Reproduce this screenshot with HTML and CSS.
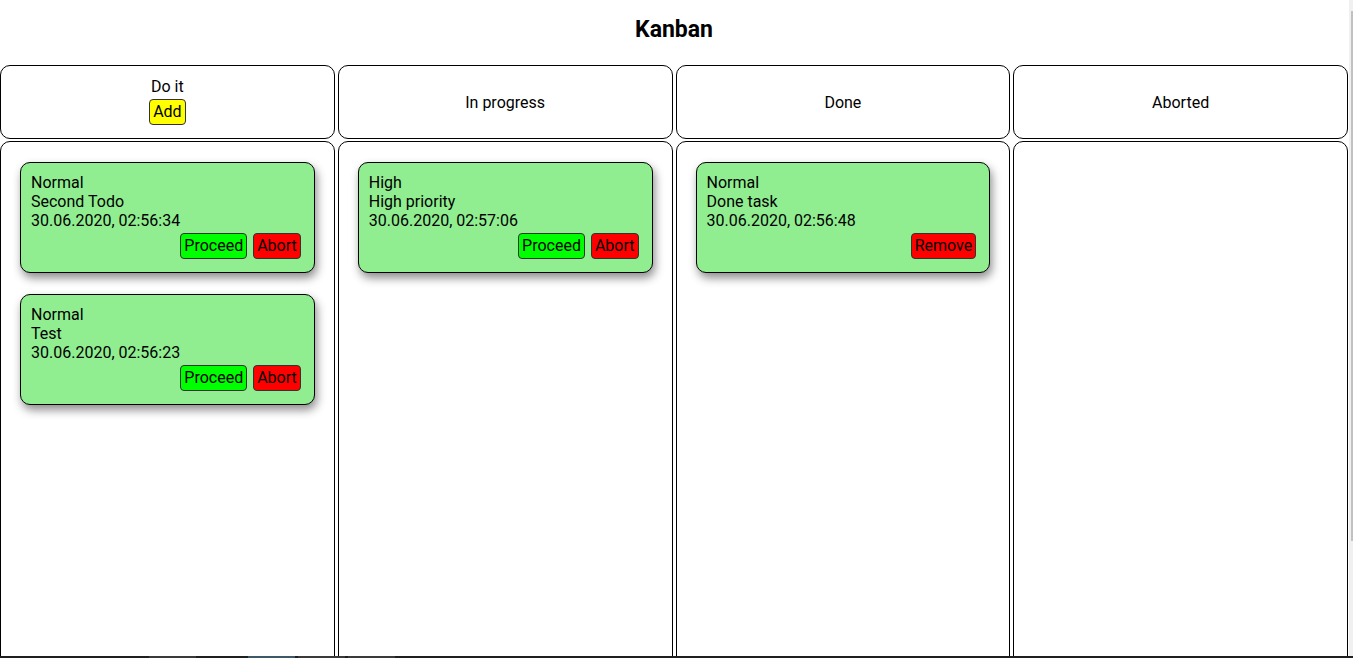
FILE: index.html
```html
<!DOCTYPE html>
<html lang="en">
<head>
<meta charset="utf-8">
<title>Kanban</title>
<link rel="stylesheet" href="styles.css">
</head>
<body>
<h1 class="title">Kanban</h1>
<main class="board">
  <section class="column">
    <header class="col-head">
      <div>Do it</div>
      <button class="btn btn-add">Add</button>
    </header>
    <div class="col-body">
      <article class="card">
        <div>Normal</div>
        <div>Second Todo</div>
        <div>30.06.2020, 02:56:34</div>
        <div class="actions">
          <button class="btn btn-go">Proceed</button><button class="btn btn-stop">Abort</button>
        </div>
      </article>
      <article class="card">
        <div>Normal</div>
        <div>Test</div>
        <div>30.06.2020, 02:56:23</div>
        <div class="actions">
          <button class="btn btn-go">Proceed</button><button class="btn btn-stop">Abort</button>
        </div>
      </article>
    </div>
  </section>
  <section class="column">
    <header class="col-head"><div>In progress</div></header>
    <div class="col-body">
      <article class="card">
        <div>High</div>
        <div>High priority</div>
        <div>30.06.2020, 02:57:06</div>
        <div class="actions">
          <button class="btn btn-go">Proceed</button><button class="btn btn-stop">Abort</button>
        </div>
      </article>
    </div>
  </section>
  <section class="column">
    <header class="col-head"><div>Done</div></header>
    <div class="col-body">
      <article class="card">
        <div>Normal</div>
        <div>Done task</div>
        <div>30.06.2020, 02:56:48</div>
        <div class="actions">
          <button class="btn btn-stop">Remove</button>
        </div>
      </article>
    </div>
  </section>
  <section class="column">
    <header class="col-head"><div>Aborted</div></header>
    <div class="col-body"></div>
  </section>
</main>
<div class="scrollbar"><div class="scroll-thumb"></div></div>
<div class="taskbar"><span class="tb-item"></span><span class="tb-item tb-active"></span><span class="tb-item"></span><span class="tb-item"></span></div>
</body>
</html>
```
FILE: styles.css
```css
body {
  margin: 0 5px 0 0;
  font-family: Roboto, "Liberation Sans", sans-serif;
  font-size: 16px;
  color: #000;
  background: #fff;
}

.title {
  margin: 16px 0 21px;
  font-size: 23px;
  line-height: 28px;
  font-weight: 700;
  text-align: center;
}

.board {
  display: grid;
  grid-template-columns: repeat(4, 1fr);
  column-gap: 3px;
}

.column {
  display: flex;
  flex-direction: column;
  gap: 2px;
  min-width: 0;
}

.col-head {
  height: 72px;
  border: 1px solid #000;
  border-radius: 10px;
  display: flex;
  flex-direction: column;
  align-items: center;
  justify-content: center;
}

.col-body {
  min-height: 780px;
  border: 1px solid #000;
  border-radius: 10px;
  padding: 20px 19px;
  display: flex;
  flex-direction: column;
  gap: 21px;
}

.card {
  background: #90ee90;
  border: 1px solid #000;
  border-radius: 10px;
  padding: 10px;
  box-shadow: 2px 5px 10px rgba(0, 0, 0, 0.45);
}

.actions {
  display: flex;
  justify-content: flex-end;
}

.btn {
  margin: 3px;
  padding: 3px 3px;
  font-family: inherit;
  font-size: 16px;
  line-height: 18px;
  color: #000;
  border: 1px solid #333;
  border-radius: 4px;
}

.btn-add {
  background: #ffff00;
}

.btn-go {
  background: #00ff00;
}

.btn-stop {
  background: #ff0000;
}

.scrollbar {
  position: fixed;
  top: 0;
  right: 0;
  bottom: 0;
  width: 4px;
  background: #f0f0f0;
  padding-top: 11px;
  display: flex;
  justify-content: flex-end;
}

.scroll-thumb {
  width: 2px;
  height: 530px;
  background: #c1c1c1;
}

.taskbar {
  position: fixed;
  left: 0;
  right: 0;
  bottom: 0;
  height: 2px;
  background: #1f1f1f;
  display: flex;
  gap: 3px;
  padding-left: 149px;
}

.tb-item {
  width: 47px;
  background: #3a3a3a;
}

.tb-item:first-child {
  margin-right: 49px;
}

.tb-active {
  background: #3c5a66;
}
```
